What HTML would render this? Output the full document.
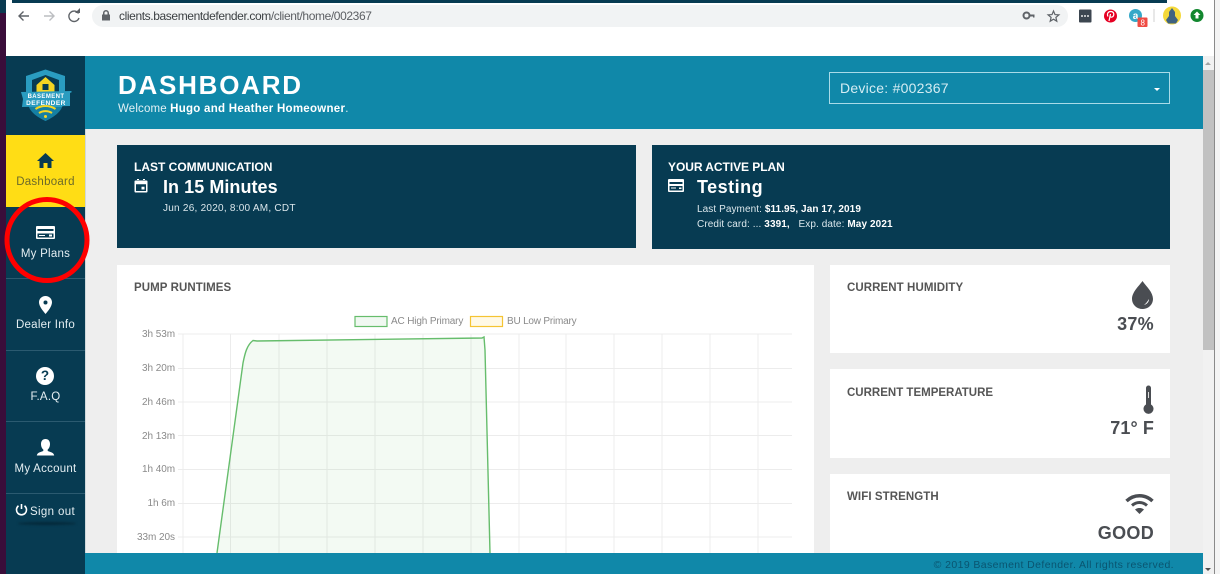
<!DOCTYPE html>
<html><head><meta charset="utf-8"><style>
html,body{margin:0;padding:0;width:1220px;height:574px;overflow:hidden;background:#fff;font-family:"Liberation Sans",sans-serif}
.a{position:absolute}
.t{position:absolute;white-space:nowrap;line-height:1}
.nav{position:absolute;left:6px;width:79px;height:71px;color:#e4eef2;border-bottom:1px solid #2b5a70}
.nav span{position:absolute;left:0;width:79px;text-align:center;top:45px;font-size:11.5px;line-height:1;letter-spacing:.25px}
.nav svg{position:absolute;left:29px;top:16px}
.h{font-weight:bold;font-size:11.5px;color:#555;letter-spacing:.08px}
.w{background:#fff}
.d{background:#073b52}
.tl{font-size:10px;color:#8a8a8a;right:1045px;text-align:right;letter-spacing:-.05px}
</style></head><body>
<div class="a" style="left:0;top:0;width:6px;height:574px;background:#3a0d3a"></div>
<div class="a" style="left:0;top:0;width:6px;height:13px;background:#0a3a50"></div>
<div class="a" style="left:12px;top:0;width:1155px;height:3px;background:#073b52"></div>
<div class="a" style="left:1214px;top:0;width:6px;height:574px;background:#f4f4f4;border-left:1px solid #8a8a8a;box-sizing:border-box"></div>
<!-- omnibox -->
<div class="a" style="left:92px;top:5px;width:976px;height:22px;border-radius:11px;background:#f1f3f4"></div>
<svg class="a" style="left:0;top:0" width="1220" height="56">
<g fill="none" stroke="#5f6368" stroke-width="1.4"><path d="M29 16H19M23.5 11.5L19 16l4.5 4.5"/><path stroke="#bcbec1" d="M44 16h10M49.500 11.500L54 16l-4.500 4.500"/><path d="M78.500 13.500A5.200 5.200 0 1 0 79 18"/></g>
<path d="M75 13h5V8z" fill="#5f6368"/>
<path d="M103 14.500v-1.500a3 3 0 0 1 6 0v1.500h1v6h-8v-6zM104.500 14.500h3v-1.500a1.500 1.500 0 0 0-3 0z" fill="#5f6368" fill-rule="evenodd"/>
<circle cx="1026.500" cy="15.500" r="3" fill="none" stroke="#5f6368" stroke-width="2"/><path d="M1029 14.500h5.500v3h-1.500v-1h-4z" fill="#5f6368"/>
<path d="M1053.500 11l1.500 3.600 3.900.3-3 2.500.9 3.800-3.300-2-3.300 2 .9-3.800-3-2.500 3.900-.3z" fill="none" stroke="#5f6368" stroke-width="1.200"/>
<rect x="1079" y="9.500" width="12.500" height="13" rx="1" fill="#3c4650"/><path d="M1081 16h9" stroke="#e8e8e8" stroke-width="1.500" stroke-dasharray="2 1"/>
<circle cx="1110.500" cy="16" r="6.500" fill="#e60023"/><path d="M1109 21l1.500-7M1108 16.500c-1.500-3 .5-5 2.800-5 2.500 0 3.500 2 2.800 4-.6 1.700-2.500 2.200-3.500 1" fill="none" stroke="#fff" stroke-width="1.200"/>
<circle cx="1135.500" cy="15.500" r="6.500" fill="#35a8c8"/><text x="1135.500" y="19" font-size="10" font-weight="bold" fill="#fff" text-anchor="middle" font-family="Liberation Sans">a</text>
<rect x="1137.500" y="17.500" width="10" height="9.500" rx="1" fill="#ef4b43"/><text x="1140.500" y="25.500" font-size="8" fill="#fff" font-family="Liberation Sans">8</text>
<rect x="1153.500" y="9" width="1" height="13" fill="#d0d0d0"/>
<circle cx="1172" cy="15.500" r="9" fill="#f4d83a"/><path d="M1172 8l3 4v4l3 4-2 3.500h-8l-2-3.500 3-4v-4z" fill="#3f6280"/>
<circle cx="1197" cy="15.500" r="6.500" fill="#12872f"/><path d="M1197 11.500l3.500 3.500h-2v3.500h-3V15h-2z" fill="#fff"/>
</svg>
<div class="t" style="left:119px;top:10px;font-size:12px;color:#5c5f63;letter-spacing:-.39px"><span style="color:#3c4043">clients.basementdefender.com</span>/client/home/002367</div>

<!-- main bg -->
<div class="a" style="left:85px;top:129px;width:1118px;height:445px;background:#eee"></div>
<div class="a" style="left:85px;top:56px;width:1118px;height:73px;background:#1088a9"></div>
<div class="a d" style="left:6px;top:56px;width:79px;height:518px"></div>
<div class="a" style="left:85px;top:129px;width:1px;height:424px;background:#cfd8dc"></div>
<div class="t" style="left:118px;top:72px;font-size:26px;font-weight:bold;color:#fff;letter-spacing:1.75px">DASHBOARD</div>
<div class="t" style="left:118px;top:104px;font-size:11.500px;color:#e3f1f5;letter-spacing:.15px">Welcome <b style="color:#fff;letter-spacing:.27px">Hugo and Heather Homeowner</b>.</div>
<div class="a" style="left:829px;top:72px;width:339px;height:30px;border:1px solid #a9dbe8"></div>
<div class="t" style="left:840px;top:81px;font-size:14px;color:#d5edf3;letter-spacing:.25px">Device: #002367</div>
<div class="a" style="left:1154px;top:88px;width:0;height:0;border-left:3px solid transparent;border-right:3px solid transparent;border-top:3px solid #fff"></div>

<!-- logo -->
<svg class="a" style="left:20px;top:68px" width="52" height="58" viewBox="0 0 52 58">
<path d="M25.500 1.500L45 8v22c0 9-10 18-19.500 23C16 48 6 39 6 30V8z" fill="#2a9cc0"/>
<path d="M25.500 7L39 12v14H12V12z" fill="#073b52"/>
<path d="M25.500 9l9 8v9h-18v-9z" fill="#f5d522"/><rect x="22.500" y="16" width="6" height="6" fill="#073b52"/>
<path d="M1 24l50-1 1 1-2 1v13l-48 1 1-8z" fill="#2a9cc0"/>
<path d="M9 39h33c-2 6-10 11-16.500 14C19 50 11 45 9 39z" fill="#157fa2"/>
<path d="M15.500 41c6-4 14-4 20 0M19 45c4-2.500 9-2.500 13 0" fill="none" stroke="#f5d522" stroke-width="2"/><circle cx="25.500" cy="48.500" r="1.500" fill="#f5d522"/>
<text x="26" y="30" font-size="6" font-weight="bold" fill="#fff" text-anchor="middle" font-family="Liberation Sans" letter-spacing=".4">BASEMENT</text>
<text x="26" y="37" font-size="6.500" font-weight="bold" fill="#fff" text-anchor="middle" font-family="Liberation Sans" letter-spacing=".5">DEFENDER</text>
</svg>

<!-- nav -->
<div class="a" style="left:6px;top:135px;width:79px;height:72px;background:#ffdd15"></div>
<div class="nav" style="top:135px;height:72px;border:0;color:#6c6a2a"><svg width="21" height="21" viewBox="0 0 21 21" style="left:29px;top:15px"><path d="M10.500 3L19 11h-2.500v7h-4v-5h-4v5h-4v-7H2z" fill="#073b52"/></svg><span style="top:42px">Dashboard</span></div>
<div class="nav" style="top:207px"><svg width="21" height="21" viewBox="0 0 21 21" style="left:29px;top:16px"><path d="M2 3h17a1 1 0 0 1 1 1v11a1 1 0 0 1-1 1H2a1 1 0 0 1-1-1V4a1 1 0 0 1 1-1zM2.500 6v2h16V6zM2.500 10.500v4h16v-4zM4 12h6v1H4zM14 11.500h3v2h-3z" fill="#fff" fill-rule="evenodd"/></svg><span style="top:42px">My Plans</span></div>
<div class="nav" style="top:279px"><svg width="21" height="21" viewBox="0 0 21 21" style="left:29px;top:16px"><path d="M10.500 1c3.700 0 6.500 2.800 6.500 6.300 0 4-4 9-6.500 11.700C8 16 4 11.300 4 7.300 4 3.800 6.800 1 10.500 1zM10.500 5.500a2 2 0 1 0 0 4 2 2 0 0 0 0-4z" fill="#fff" fill-rule="evenodd"/></svg><span style="top:41px">Dealer Info</span></div>
<div class="nav" style="top:351px;height:70px"><div class="a" style="left:30px;top:16px;width:18px;height:18px;border-radius:50%;background:#fff;color:#073b52;font-size:13.500px;font-weight:bold;text-align:center;line-height:18px">?</div><span style="top:41px">F.A.Q</span></div>
<div class="nav" style="top:422px"><svg width="21" height="21" viewBox="0 0 21 21" style="left:29px;top:16px"><path d="M10.500 1c2.800 0 4.500 2 4.500 5 0 2.500-1 4.500-2.300 5.500v1.500c2.700 1 6 1.500 6.500 4.500h-17.400c.5-3 3.800-3.500 6.500-4.500v-1.500C7 10.500 6 8.500 6 6c0-3 1.700-5 4.500-5z" fill="#fff"/></svg><span style="top:42px">My Account</span></div>
<svg class="a" style="left:15px;top:503px" width="13" height="13" viewBox="0 0 13 13"><path d="M3.500 2.800a5 5 0 1 0 6 0" fill="none" stroke="#fff" stroke-width="1.600"/><path d="M6.500 1v5" stroke="#fff" stroke-width="1.600"/></svg>
<div class="t" style="left:30px;top:507px;font-size:11.500px;color:#e4eef2;letter-spacing:.35px">Sign out</div>
<div class="a" style="left:18px;top:522px;width:58px;height:3px;background:#04293a;border-radius:50%;filter:blur(1px)"></div>

<!-- top cards -->
<div class="a d" style="left:117px;top:145px;width:519px;height:103px"></div>
<div class="t" style="left:134px;top:161px;font-size:12px;font-weight:bold;color:#fff;letter-spacing:0">LAST COMMUNICATION</div>
<svg class="a" style="left:133px;top:178px" width="16" height="16" viewBox="0 0 16 16"><path d="M2.500 2.500h11a1 1 0 0 1 1 1v10a1 1 0 0 1-1 1h-11a1 1 0 0 1-1-1v-10a1 1 0 0 1 1-1zM3 6.200v6.800h10V6.200zM4 1h2v2H4zM10 1h2v2h-2zM8.500 8.800h3v2.700h-3z" fill="#fff" fill-rule="evenodd"/></svg>
<div class="t" style="left:163px;top:178px;font-size:18px;font-weight:bold;color:#fff;letter-spacing:.05px">In 15 Minutes</div>
<div class="t" style="left:163px;top:204px;font-size:10px;color:#dbe7ec;letter-spacing:.25px">Jun 26, 2020, 8:00 AM, CDT</div>

<div class="a d" style="left:652px;top:145px;width:518px;height:104px"></div>
<div class="t" style="left:668px;top:161px;font-size:12px;font-weight:bold;color:#fff;letter-spacing:-.05px">YOUR ACTIVE PLAN</div>
<svg class="a" style="left:668px;top:179px" width="16" height="13" viewBox="0 0 16 13"><path d="M1 0h14a1 1 0 0 1 1 1v11a1 1 0 0 1-1 1H1a1 1 0 0 1-1-1V1a1 1 0 0 1 1-1zM1.500 3v2h13V3zM1.500 7v4.500h13V7zM3 8.500h5v1H3zM11 8.500h2.500v1.500H11z" fill="#fff" fill-rule="evenodd"/></svg>
<div class="t" style="left:697px;top:178px;font-size:18px;font-weight:bold;color:#fff;letter-spacing:.5px">Testing</div>
<div class="t" style="left:697px;top:205px;font-size:10px;color:#dbe7ec;letter-spacing:.08px">Last Payment: <b style="color:#fff">$11.95, Jan 17, 2019</b></div>
<div class="t" style="left:697px;top:220px;font-size:10px;color:#dbe7ec;letter-spacing:.1px">Credit card: ... <b style="color:#fff">3391,</b> &nbsp; Exp. date: <b style="color:#fff">May 2021</b></div>

<!-- chart panel -->
<div class="a w" style="left:117px;top:265px;width:697px;height:288px"></div>
<div class="t h" style="left:134px;top:283px">PUMP RUNTIMES</div>
<svg class="a" style="left:117px;top:265px" width="697" height="288">
<g transform="translate(-117,-265)">
<g stroke="#ececec" stroke-width="1" fill="none">
<path d="M178 334H792M178 368.500H792M178 402H792M178 435.500H792M178 469.500H792M178 503.500H792M178 537H792"/>
<path d="M183 334V553M230.500 334V553M279 334V553M327 334V553M375 334V553M423 334V553M471 334V553M519 334V553M566 334V553M614 334V553M662 334V553M710 334V553M758 334V553"/>
</g>
<path d="M217 553L243 363C245 353 247 345 253 340.500L257 341L482 338L484 337L485 350L490 553Z" fill="#4fb55a" fill-opacity=".07"/>
<path d="M217 553L243 363C245 353 247 345 253 340.500L257 341L482 338L484 337L485 350L490 553" fill="none" stroke="#66bd6c" stroke-width="1.400"/>
<rect x="355" y="316.500" width="32" height="10" fill="#f0f8f1" stroke="#66bd6c" stroke-width="1.200"/>
<rect x="470.500" y="316.500" width="32" height="10" fill="#fff9e6" stroke="#f5c433" stroke-width="1.200"/>
</g></svg>
<div class="t" style="left:391px;top:317px;font-size:10px;color:#8a8a8a;letter-spacing:-.15px">AC High Primary</div>
<div class="t" style="left:507px;top:317px;font-size:10px;color:#8a8a8a;letter-spacing:-.2px">BU Low Primary</div>
<div class="t tl" style="top:330px">3h 53m</div>
<div class="t tl" style="top:364px">3h 20m</div>
<div class="t tl" style="top:398px">2h 46m</div>
<div class="t tl" style="top:432px">2h 13m</div>
<div class="t tl" style="top:465px">1h 40m</div>
<div class="t tl" style="top:499px">1h 6m</div>
<div class="t tl" style="top:533px">33m 20s</div>

<!-- right cards -->
<div class="a w" style="left:830px;top:265px;width:340px;height:88px"></div>
<div class="a w" style="left:830px;top:369px;width:340px;height:89px"></div>
<div class="a w" style="left:830px;top:474px;width:340px;height:79px"></div>
<div class="t h" style="left:847px;top:283px">CURRENT HUMIDITY</div>
<div class="t h" style="left:847px;top:388px;letter-spacing:0">CURRENT TEMPERATURE</div>
<div class="t h" style="left:847px;top:492px">WIFI STRENGTH</div>
<svg class="a" style="left:1130px;top:280px" width="24" height="30" viewBox="0 0 24 30"><path d="M12.500 1C16 6 23 12 23 19a10.500 10 0 0 1-21 0C2 12 9 6 12.500 1z" fill="#4a4d52"/><path d="M19 19c0 3-2 5-5 6 2-1.500 3.500-3.500 5-6z" fill="#fff"/></svg>
<div class="t" style="right:66px;top:315px;font-size:18px;font-weight:bold;color:#4a4d52;letter-spacing:.3px">37%</div>
<svg class="a" style="left:1142px;top:384px" width="12" height="30" viewBox="0 0 12 30"><path d="M4 4a2.500 2.500 0 0 1 5 0v16.500a5 5 0 1 1-5 0z" fill="#4a4d52"/><rect x="6" y="8" width="1" height="6" fill="#ddd"/></svg>
<div class="t" style="right:66px;top:419px;font-size:18px;font-weight:bold;color:#4a4d52;letter-spacing:.1px">71° F</div>
<svg class="a" style="left:1125px;top:493px" width="30" height="22" viewBox="0 0 30 22"><path d="M1.500 8C9 1 20 1 27.500 8" fill="none" stroke="#4a4d52" stroke-width="3.500"/><path d="M7 12.500c4.500-4 10.500-4 15 0" fill="none" stroke="#4a4d52" stroke-width="3"/><path d="M14.500 21l-4.500-4.500c2.500-2 6.500-2 9 0z" fill="#4a4d52"/></svg>
<div class="t" style="right:66px;top:524px;font-size:18px;font-weight:bold;color:#4a4d52;letter-spacing:.3px">GOOD</div>

<!-- footer -->
<div class="a" style="left:85px;top:553px;width:1118px;height:21px;background:#1088a9"></div>
<div class="t" style="right:46px;top:560px;font-size:10.500px;color:#0a5570;letter-spacing:.4px">© 2019 Basement Defender. All rights reserved.</div>

<!-- scrollbar -->
<div class="a" style="left:1203px;top:56px;width:11px;height:518px;background:#f1f1f1"></div>
<div class="a" style="left:1203px;top:70px;width:11px;height:280px;background:#c1c1c1"></div>
<div class="a" style="left:1205px;top:62px;width:0;height:0;border-left:3px solid transparent;border-right:3px solid transparent;border-bottom:3px solid #a3a3a3"></div>
<div class="a" style="left:1205px;top:568px;width:0;height:0;border-left:3px solid transparent;border-right:3px solid transparent;border-top:3px solid #505050"></div>

<!-- red circle -->
<svg class="a" style="left:0;top:190px" width="100" height="100"><ellipse cx="47" cy="50" rx="40" ry="40.500" fill="none" stroke="#f00" stroke-width="5"/></svg>
</body></html>
